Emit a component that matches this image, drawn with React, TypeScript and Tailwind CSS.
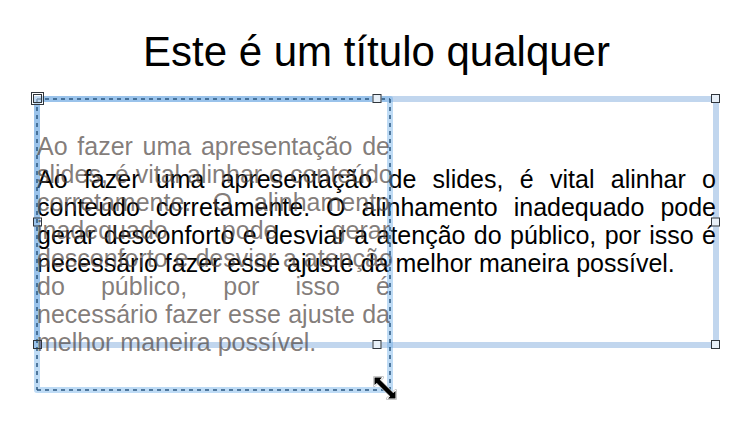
const BODY =
  "Ao fazer uma apresentação de slides, é vital alinhar o conteúdo corretamente. O alinhamento inadequado pode gerar desconforto e desviar a atenção do público, por isso é necessário fazer esse ajuste da melhor maneira possível.";

const PREVIEW_LINES = [
  "Ao fazer uma apresentação de",
  "slides, é vital alinhar o conteúdo",
  "corretamente. O alinhamento",
  "inadequado pode gerar",
  "desconforto e desviar a atenção",
  "do público, por isso é",
  "necessário fazer esse ajuste da",
  "melhor maneira possível.",
];

const HANDLES = [
  { name: "superior central", place: "-top-2 left-1/2 -translate-x-1/2 bg-[#e8f0f8]" },
  { name: "superior direita", place: "-top-2 -right-[7px] bg-[#e8f0f8]" },
  { name: "central esquerda", place: "top-1/2 -left-[7px] -translate-y-1/2 bg-transparent" },
  { name: "central direita", place: "top-1/2 -right-[7px] -translate-y-1/2 bg-[#e8f0f8]" },
  { name: "inferior esquerda", place: "-bottom-[7px] -left-[7px] bg-transparent" },
  { name: "inferior central", place: "-bottom-[7px] left-1/2 -translate-x-1/2 bg-[#e8f0f8]" },
  { name: "inferior direita", place: "-right-[7px] -bottom-[7px] bg-[#e8f0f8]" },
];

function ResizeCursor() {
  return (
    <svg className="absolute -right-[10px] -bottom-[13px] size-6" viewBox="0 0 24 24" aria-hidden="true">
      <path
        d="M0.5 0.5H10.5V2L8 4.5L19.5 16L22 13.5H23.5V23.5H13.5V22L16 19.5L4.5 8L2 10.5H0.5Z"
        fill="#fff"
        stroke="#c8c8c8"
      />
      <path d="M1.5 1.5H9L6.8 3.7L20.2 17.1L22.5 15V22.5H15L17.2 20.3L3.8 6.9L1.5 9Z" fill="#000" />
    </svg>
  );
}

function DragPreview() {
  return (
    <div className="pointer-events-none absolute -top-[6px] -left-[6px] flex h-[297px] w-[359px] items-center rounded-[3px] border-6 border-[#64aae6]/42">
      <p className="-mx-[3px] min-w-0 flex-1 pb-0.5 text-[25px] leading-7 text-[#4d4440]/70" aria-hidden="true">
        {PREVIEW_LINES.map((line) => (
          <span
            key={line}
            className="block whitespace-nowrap text-justify [text-align-last:justify] last:[text-align-last:left]"
          >
            {line}
          </span>
        ))}
      </p>
      <svg className="absolute -inset-[3px] size-[calc(100%+6px)] overflow-visible" aria-hidden="true">
        <g stroke="#28557f" strokeOpacity="0.75" strokeWidth="2" strokeDasharray="4 4">
          <line x1="0" y1="0" x2="100%" y2="0" />
          <line x1="100%" y1="0" x2="100%" y2="100%" />
          <line x1="0" y1="100%" x2="100%" y2="100%" />
          <line x1="0" y1="0" x2="0" y2="100%" />
        </g>
      </svg>
      <ResizeCursor />
    </div>
  );
}

export default function App() {
  return (
    <main className="min-h-screen bg-white px-[34px] pt-7 font-['Liberation_Sans',Arial,sans-serif] text-black">
      <h1 className="text-center text-[42px] leading-[48px]">Este é um título qualquer</h1>
      <section className="relative mt-5 flex min-h-[252px] items-center border-6 border-[#c1d6ee]">
        <p className="-mx-[3px] pb-0.5 text-justify text-[25px] leading-7">{BODY}</p>
        <DragPreview />
        {HANDLES.map((h) => (
          <button
            key={h.name}
            type="button"
            aria-label={`Alça ${h.name}`}
            className={`absolute size-[9px] border border-[#30363c] ${h.place}`}
          />
        ))}
        <button
          type="button"
          aria-label="Alça superior esquerda"
          className="absolute -top-[10px] -left-[9px] flex size-[13px] items-center justify-center border border-[#30363c] bg-white/40"
        >
          <span className="size-[9px] border border-[#30363c]" />
        </button>
      </section>
    </main>
  );
}
